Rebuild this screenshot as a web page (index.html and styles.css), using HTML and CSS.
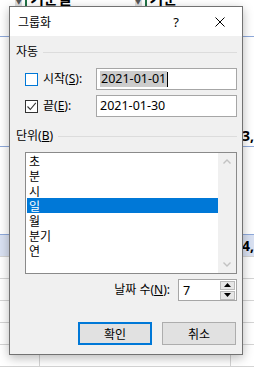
FILE: index.html
```html
<!DOCTYPE html>
<html lang="ko">
<head>
    <meta charset="UTF-8">
    <meta name="viewport" content="width=device-width, initial-scale=1.0">
    <title>그룹화</title>
    <link rel="stylesheet" href="styles.css">
</head>
<body>
<div class="sheet">
  <div class="hdr">
    <span class="hdr-pad"></span>
    <span class="dd-btn">▼</span>
    <span class="hdr-text">기준일</span>
    <span class="dd-btn dd-right">▼</span>
    <span class="hdr-text">기준</span>
  </div>
  <div class="row row-top blue-bottom"><span class="cell col-a"></span><span class="cell col-b"></span><span class="cell col-c"></span></div>
  <div class="row row-mid blue-bottom"><span class="cell col-a"></span><span class="cell col-b"></span><span class="cell col-c num">3,</span></div>
  <div class="row row-gap"><span class="cell col-a"></span><span class="cell col-b"></span><span class="cell col-c"></span></div>
  <div class="row row-total"><span class="cell col-a"></span><span class="cell col-b"></span><span class="cell col-c num">4,</span></div>
  <div class="row"><span class="cell col-a"></span><span class="cell col-b"></span><span class="cell col-c"></span></div>
  <div class="row"><span class="cell col-a"></span><span class="cell col-b"></span><span class="cell col-c"></span></div>
  <div class="row"><span class="cell col-a"></span><span class="cell col-b"></span><span class="cell col-c"></span></div>
  <div class="row"><span class="cell col-a"></span><span class="cell col-b"></span><span class="cell col-c"></span></div>
  <div class="row"><span class="cell col-a"></span><span class="cell col-b"></span><span class="cell col-c"></span></div>
</div>

<div class="dialog">
  <div class="titlebar">
    <span class="title">그룹화</span>
    <span class="help">?</span>
    <svg class="close" width="10" height="10" viewBox="0 0 10 10">
      <path d="M0.5 0.5 L9.5 9.5 M9.5 0.5 L0.5 9.5" stroke="#000" stroke-width="1" fill="none"/>
    </svg>
  </div>
  <div class="body">
    <div class="group-title"><span>자동</span><span class="rule"></span></div>

    <div class="field-row">
      <span class="check focus"></span>
      <span class="lbl">시작(<u>S</u>):</span>
      <div class="textbox"><span class="sel">2021-01-01</span><span class="caret"></span></div>
    </div>
    <div class="field-row second">
      <span class="check checked">
        <svg width="11" height="11" viewBox="0 0 11 11"><path d="M1.5 5.5 L4.3 8.5 L9.8 1.8" stroke="#333" stroke-width="1.1" fill="none"/></svg>
      </span>
      <span class="lbl">끝(<u>E</u>):</span>
      <div class="textbox">2021-01-30</div>
    </div>

    <div class="group-title unit"><span>단위(<u>B</u>)</span><span class="rule"></span></div>

    <div class="listbox">
      <div class="items">
        <div class="item">초</div>
        <div class="item">분</div>
        <div class="item">시</div>
        <div class="item selected">일</div>
        <div class="item">월</div>
        <div class="item">분기</div>
        <div class="item">연</div>
      </div>
      <div class="vscroll">
        <svg width="8" height="5" viewBox="0 0 8 5"><path d="M0.5 4.5 L4 1 L7.5 4.5" stroke="#c2c2c2" stroke-width="1.4" fill="none"/></svg>
        <svg width="8" height="5" viewBox="0 0 8 5"><path d="M0.5 0.5 L4 4 L7.5 0.5" stroke="#c2c2c2" stroke-width="1.4" fill="none"/></svg>
      </div>
    </div>

    <div class="spin-row">
      <span class="lbl">날짜 수(<u>N</u>):</span>
      <div class="spinbox">
        <span class="spin-val">7</span>
        <div class="spin-btns">
          <span class="spin-btn"><svg width="7" height="4" viewBox="0 0 7 4"><path d="M0 4 L3.5 0 L7 4 Z" fill="#000"/></svg></span>
          <span class="spin-btn"><svg width="7" height="4" viewBox="0 0 7 4"><path d="M0 0 L3.5 4 L7 0 Z" fill="#000"/></svg></span>
        </div>
      </div>
    </div>

    <div class="button-row">
      <button class="btn default">확인</button>
      <button class="btn">취소</button>
    </div>
  </div>
</div>
</body>
</html>
```

FILE: styles.css
```css
body {
    margin: 0;
    padding: 0;
    width: 254px;
    height: 367px;
    overflow: hidden;
    position: relative;
    background: #ffffff;
    font-family: "Noto Sans", "Noto Sans CJK KR", sans-serif;
    font-size: 12px;
    color: #000000;
}

/* spreadsheet behind the dialog */
.sheet {
    width: 254px;
}
.hdr {
    height: 6px;
    overflow: hidden;
    display: flex;
    background: #ffffff;
}
.hdr-pad {
    width: 25px;
}
.dd-btn {
    width: 10px;
    height: 6px;
    background: #dedede;
    color: #555555;
    font-size: 7px;
    line-height: 4px;
    text-align: center;
    border-right: 3px solid #ffffff;
    box-shadow: 2px 0 0 #217346 inset;
    box-shadow: none;
}
.hdr-text {
    border-left: 2px solid #217346;
    padding-left: 3px;
    font-family: "Noto Sans CJK KR", sans-serif;
    font-weight: bold;
    font-size: 15px;
    line-height: 14px;
    margin-top: -9px;
    width: 172px;
}
.dd-right {
    margin-left: 0;
}
.row {
    display: flex;
    height: 22px;
    box-sizing: border-box;
    border-bottom: 1px solid #d4d4d4;
}
.cell {
    display: block;
    height: 100%;
}
.col-a {
    width: 40px;
    box-sizing: border-box;
    border-right: 1px solid #d4d4d4;
}
.col-b {
    width: 191px;
    box-sizing: border-box;
    border-right: 1px solid #d4d4d4;
}
.col-c {
    flex: 1;
}
.num {
    padding-left: 12px;
    font-weight: bold;
    font-size: 14px;
    line-height: 20px;
    display: flex;
    align-items: flex-end;
}
.row-top {
    height: 31px;
}
.row-mid {
    height: 110px;
}
.row-mid .num {
    padding-bottom: 3px;
}
.blue-bottom {
    border-bottom: 1px solid #8ea9db;
}
.row-gap {
    height: 87px;
    border-bottom: none;
}
.row-total {
    height: 23px;
    border-top: 1px solid #8ea9db;
    background: #d9e1f2;
}
.row-total .num {
    align-items: center;
}

/* dialog */
.dialog {
    position: absolute;
    left: 9px;
    top: 6px;
    width: 234px;
    height: 349px;
    box-sizing: border-box;
    border: 1px solid #727272;
    background: #f0f0f0;
    box-shadow: 0 3px 10px rgba(0, 0, 0, 0.28);
    display: flex;
    flex-direction: column;
}
.titlebar {
    height: 29px;
    background: #ffffff;
    display: flex;
    align-items: center;
    padding-left: 8px;
    font-family: "Noto Sans CJK KR", sans-serif;
}
.title {
    font-size: 12px;
    line-height: 14px;
    flex: 1;
}
.help {
    font-family: "Noto Sans", sans-serif;
    font-size: 13px;
    line-height: 14px;
    margin-right: 36px;
}
.close {
    margin-right: 17px;
}
.body {
    flex: 1;
    padding: 0 5px 0 6px;
}
.group-title {
    display: flex;
    align-items: center;
    gap: 5px;
    height: 14px;
    line-height: 14px;
    margin-top: 9px;
}
.group-title .rule {
    flex: 1;
    height: 1px;
    background: #dcdcdc;
}
.group-title.unit {
    margin-top: 12px;
}
.field-row {
    display: flex;
    align-items: center;
    height: 22px;
    margin-top: 9px;
    padding-left: 9px;
}
.field-row.second {
    margin-top: 5px;
}
.check {
    width: 13px;
    height: 13px;
    box-sizing: border-box;
    border: 1px solid #333333;
    background: #ffffff;
    display: flex;
    align-items: center;
    justify-content: center;
}
.check.focus {
    border-color: #0078d7;
}
.lbl {
    margin-left: 5px;
    line-height: 14px;
}
.textbox {
    margin-left: auto;
    width: 141px;
    height: 22px;
    box-sizing: border-box;
    border: 1px solid #a6a6a6;
    background: #ffffff;
    display: flex;
    align-items: center;
    padding-left: 3px;
    font-size: 12.5px;
    line-height: 16px;
}
.sel {
    background: #cccccc;
    padding: 0 1px;
}
.caret {
    width: 1px;
    height: 15px;
    background: #000000;
}
.listbox {
    margin-top: 9px;
    margin-left: 9px;
    width: 212px;
    height: 122px;
    box-sizing: border-box;
    border: 1px solid #8a8a8a;
    background: #ffffff;
    display: flex;
}
.items {
    flex: 1;
    padding-left: 1px;
}
.item {
    height: 15px;
    line-height: 15px;
    padding-left: 2px;
    font-family: "Noto Sans CJK KR", sans-serif;
}
.item.selected {
    background: #0078d7;
    color: #ffffff;
}
.vscroll {
    width: 18px;
    background: #f0f0f0;
    display: flex;
    flex-direction: column;
    align-items: center;
    justify-content: space-between;
    padding: 6px 0;
    box-sizing: border-box;
}
.spin-row {
    display: flex;
    align-items: center;
    justify-content: flex-end;
    height: 22px;
    margin-top: 5px;
}
.spin-row .lbl {
    margin-right: 8px;
}
.spinbox {
    width: 59px;
    height: 22px;
    box-sizing: border-box;
    border: 1px solid #a6a6a6;
    background: #ffffff;
    display: flex;
    align-items: center;
}
.spin-val {
    flex: 1;
    padding-left: 4px;
    font-size: 12.5px;
}
.spin-btns {
    display: flex;
    flex-direction: column;
    gap: 1px;
    margin-right: 1px;
}
.spin-btn {
    width: 15px;
    height: 9px;
    box-sizing: border-box;
    border: 1px solid #b9b9b9;
    background: #e6e6e6;
    display: flex;
    align-items: center;
    justify-content: center;
}
.button-row {
    display: flex;
    justify-content: flex-end;
    gap: 10px;
    margin-top: 21px;
    margin-right: 1px;
}
.btn {
    width: 74px;
    height: 23px;
    box-sizing: border-box;
    border: 1px solid #adadad;
    background: #e1e1e1;
    font-family: "Noto Sans CJK KR", sans-serif;
    font-size: 12px;
    padding: 0;
    color: #000000;
}
.btn.default {
    border: 2px solid #0078d7;
}
```
